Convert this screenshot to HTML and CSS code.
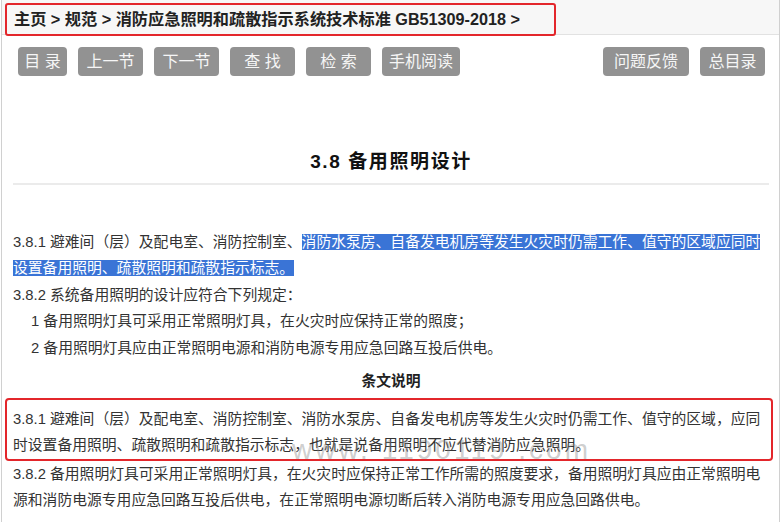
FILE: index.html
```html
<!DOCTYPE html>
<html lang="zh-CN">
<head>
    <meta charset="UTF-8">
    <meta name="viewport" content="width=device-width, initial-scale=1.0">
    <title>3.8 备用照明设计 - 消防应急照明和疏散指示系统技术标准</title>
    <link rel="stylesheet" href="styles.css">
</head>
<body>
    <div class="page">
        <div class="crumb">
            <span class="crumb-box">主页 &gt; 规范 &gt; 消防应急照明和疏散指示系统技术标准 GB51309-2018 &gt;</span>
        </div>

        <nav class="toolbar">
            <div class="btn-group">
                <a href="#" class="btn w50">目 录</a>
                <a href="#" class="btn">上一节</a>
                <a href="#" class="btn">下一节</a>
                <a href="#" class="btn">查 找</a>
                <a href="#" class="btn">检 索</a>
                <a href="#" class="btn w78">手机阅读</a>
            </div>
            <div class="btn-group">
                <a href="#" class="btn w86">问题反馈</a>
                <a href="#" class="btn">总目录</a>
            </div>
        </nav>

        <main class="content">
            <h1 class="section-title">3.8 备用照明设计</h1>

            <div class="article">
                <p>3.8.1 避难间（层）及配电室、消防控制室、<span class="hl">消防水泵房、自备发电机房等发生火灾时仍需工作、值守的区域应同时设置备用照明、疏散照明和疏散指示标志。</span></p>
                <p>3.8.2 系统备用照明的设计应符合下列规定：</p>
                <p class="item">1 备用照明灯具可采用正常照明灯具，在火灾时应保持正常的照度；</p>
                <p class="item">2 备用照明灯具应由正常照明电源和消防电源专用应急回路互投后供电。</p>

                <h4 class="note-title">条文说明</h4>
                <div class="mark-box">
                    <p>3.8.1 避难间（层）及配电室、消防控制室、消防水泵房、自备发电机房等发生火灾时仍需工作、值守的区域，应同时设置备用照明、疏散照明和疏散指示标志，也就是说备用照明不应代替消防应急照明。</p>
                </div>
                <p>3.8.2 备用照明灯具可采用正常照明灯具，在火灾时应保持正常工作所需的照度要求，备用照明灯具应由正常照明电源和消防电源专用应急回路互投后供电，在正常照明电源切断后转入消防电源专用应急回路供电。</p>
            </div>

            <span class="watermark">www. 1190119 .com</span>
        </main>
    </div>
</body>
</html>
```

FILE: styles.css
```css
body {
    margin: 0;
    font-family: "Liberation Sans", "Noto Sans CJK SC", sans-serif;
    color: #333;
    background: #fff;
}
.page {
    width: 777px;
    min-height: 522px;
    margin-left: 1px;
    border-left: 1px solid #d0d0d0;
    border-right: 1px solid #d0d0d0;
    position: relative;
}
.crumb {
    height: 34px;
    background-color: #f7f7f7;
    border-bottom: 1px solid #e2e2e2;
    position: relative;
}
.crumb-box {
    position: absolute;
    left: 3px;
    top: 3px;
    width: 540px;
    height: 29px;
    padding-left: 7px;
    border: 2px solid #e3262b;
    border-radius: 3px;
    font-size: 16.2px;
    font-weight: bold;
    line-height: 29px;
    color: #222;
}
.toolbar {
    display: flex;
    justify-content: space-between;
    padding: 12px 14px 0 16px;
}
.btn-group {
    display: flex;
    gap: 11px;
}
.btn {
    display: block;
    width: 65px;
    height: 29px;
    line-height: 29px;
    text-align: center;
    background-color: #929292;
    color: #f6f6f6;
    font-size: 16px;
    text-decoration: none;
    border-radius: 4px;
}
.btn.w50 { width: 49px; }
.btn.w78 { width: 78px; }
.btn.w86 { width: 86px; }
.content {
    padding: 0 10px 0 11px;
}
.section-title {
    margin: 71px 0 0;
    padding-bottom: 6px;
    border-bottom: 2px solid #ebebeb;
    font-size: 19px;
    line-height: 30px;
    text-align: center;
    color: #111;
    letter-spacing: 1.6px;
}
.article {
    margin-top: 44px;
    font-size: 14.8px;
    line-height: 26.4px;
}
.article p {
    margin: 0;
}
.article .item {
    padding-left: 18px;
}
.hl {
    background-color: #3a74d6;
    color: #fff;
}
.note-title {
    margin: 7px 0 4px;
    font-size: 14.8px;
    line-height: 26px;
    text-align: center;
    color: #222;
}
.mark-box {
    margin: 0 -4px 0 -8px;
    padding: 6px 2px 0 6px;
    border: 2px solid #e3262b;
    border-radius: 4px;
}
.watermark {
    position: absolute;
    left: 290px;
    top: 434px;
    font-size: 28px;
    letter-spacing: 3px;
    color: rgba(130, 130, 130, 0.4);
    white-space: pre;
}
```
